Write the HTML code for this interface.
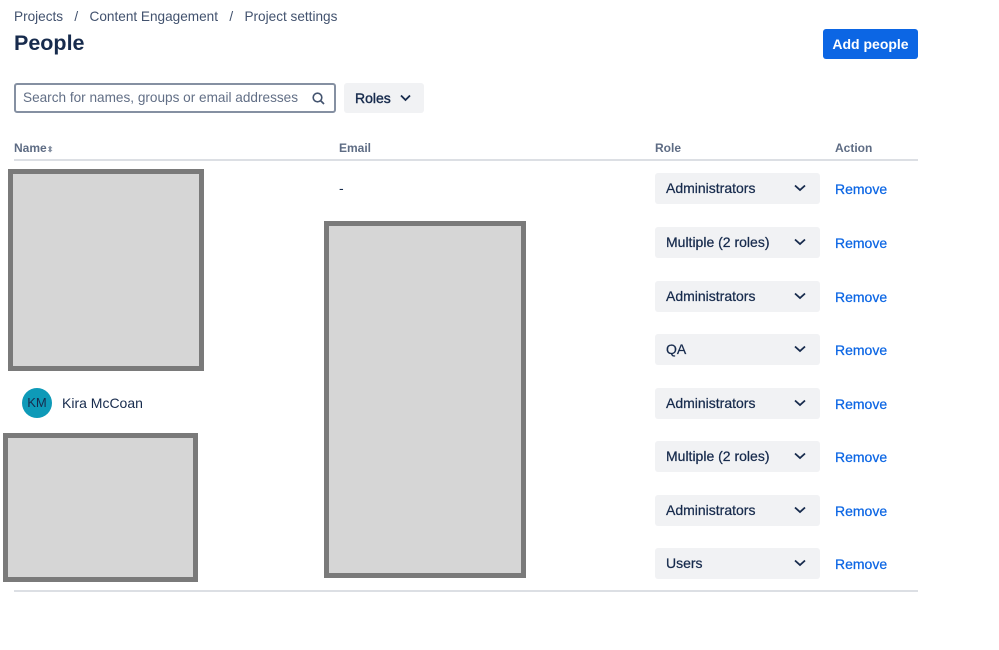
<!DOCTYPE html>
<html><head><meta charset="utf-8"><style>
*{margin:0;padding:0;box-sizing:border-box}
body{width:999px;height:650px;background:#fff;font-family:"Liberation Sans",sans-serif;color:#172b4d;position:relative;overflow:hidden}
.a{position:absolute;white-space:nowrap}
.crumb{top:9px;font-size:13.6px;color:#42526e}
.sel{position:absolute;left:655px;width:165px;height:31px;background:#f1f2f4;border-radius:3px;font-size:14px;line-height:31px;padding-left:11px;color:#172b4d;-webkit-text-stroke:0.25px #172b4d}
.sel svg{position:absolute;right:14px;top:11px}
.rm{position:absolute;left:835px;font-size:14px;color:#0c66e4;-webkit-text-stroke:0.25px #0c66e4}
.gb{position:absolute;background:#d6d6d6;border:5px solid #7a7a7a}
.th{top:141px;font-size:12px;font-weight:bold;color:#5e6c84}
</style></head><body>
<div class="a crumb" style="left:14px">Projects&nbsp;&nbsp;&nbsp;/&nbsp;&nbsp;&nbsp;Content Engagement&nbsp;&nbsp;&nbsp;/&nbsp;&nbsp;&nbsp;Project settings</div>
<div class="a" style="left:14px;top:31px;font-size:21.5px;font-weight:bold;color:#172b4d">People</div>
<div class="a" style="left:823px;top:29px;width:95px;height:30px;background:#0c66e4;border-radius:3px;color:#fff;font-size:14px;font-weight:bold;line-height:30px;text-align:center">Add people</div>
<div class="a" style="left:14px;top:83px;width:322px;height:30px;border:2px solid #8590a2;border-radius:3px;font-size:13.6px;color:#626f86;line-height:26px;padding-left:7px">Search for names, groups or email addresses
<svg style="position:absolute;right:9px;top:7px" width="13" height="13" viewBox="0 0 13 13"><circle cx="5.5" cy="5.5" r="4.3" fill="none" stroke="#44546f" stroke-width="1.6"/><path d="M8.6 8.6L12 12" stroke="#44546f" stroke-width="1.7"/></svg></div>
<div class="a" style="left:344px;top:83px;width:80px;height:30px;background:#f1f2f4;border-radius:3px;font-size:14px;line-height:30px;padding-left:11px;-webkit-text-stroke:0.4px #172b4d">Roles
<svg style="position:absolute;left:56px;top:11px" width="11" height="8" viewBox="0 0 11 8"><path d="M1 1.5l4.5 4.5 4.5-4.5" fill="none" stroke="#172b4d" stroke-width="1.8"/></svg></div>
<div class="a th" style="left:14px">Name<span style="font-size:8px;color:#8590a2">&#x2B0D;</span></div>
<div class="a th" style="left:339px">Email</div>
<div class="a th" style="left:655px">Role</div>
<div class="a th" style="left:835px">Action</div>
<div class="a" style="left:14px;top:159px;width:904px;height:2px;background:#dcdfe4"></div>
<div class="a" style="left:14px;top:590px;width:904px;height:2px;background:#dcdfe4"></div>
<div class="a" style="left:339px;top:180px;font-size:14px">-</div>
<div class="a" style="left:22px;top:388px;width:30px;height:30px;border-radius:50%;background:#0e9ab8;color:#172b4d;font-size:13px;line-height:30px;text-align:center">KM</div>
<div class="a" style="left:62px;top:395px;font-size:14px">Kira McCoan</div>
<div class="gb" style="left:8px;top:169px;width:196px;height:202px"></div>
<div class="gb" style="left:324px;top:221px;width:202px;height:357px"></div>
<div class="gb" style="left:3px;top:433px;width:195px;height:149px"></div>

<div class="sel" style="top:173px">Administrators<svg width="12" height="8" viewBox="0 0 12 8"><path d="M1 1.5l5 4.5 5-4.5" fill="none" stroke="#172b4d" stroke-width="1.8"/></svg></div><div class="rm" style="top:181px">Remove</div>
<div class="sel" style="top:227px">Multiple (2 roles)<svg width="12" height="8" viewBox="0 0 12 8"><path d="M1 1.5l5 4.5 5-4.5" fill="none" stroke="#172b4d" stroke-width="1.8"/></svg></div><div class="rm" style="top:235px">Remove</div>
<div class="sel" style="top:281px">Administrators<svg width="12" height="8" viewBox="0 0 12 8"><path d="M1 1.5l5 4.5 5-4.5" fill="none" stroke="#172b4d" stroke-width="1.8"/></svg></div><div class="rm" style="top:289px">Remove</div>
<div class="sel" style="top:334px">QA<svg width="12" height="8" viewBox="0 0 12 8"><path d="M1 1.5l5 4.5 5-4.5" fill="none" stroke="#172b4d" stroke-width="1.8"/></svg></div><div class="rm" style="top:342px">Remove</div>
<div class="sel" style="top:388px">Administrators<svg width="12" height="8" viewBox="0 0 12 8"><path d="M1 1.5l5 4.5 5-4.5" fill="none" stroke="#172b4d" stroke-width="1.8"/></svg></div><div class="rm" style="top:396px">Remove</div>
<div class="sel" style="top:441px">Multiple (2 roles)<svg width="12" height="8" viewBox="0 0 12 8"><path d="M1 1.5l5 4.5 5-4.5" fill="none" stroke="#172b4d" stroke-width="1.8"/></svg></div><div class="rm" style="top:449px">Remove</div>
<div class="sel" style="top:495px">Administrators<svg width="12" height="8" viewBox="0 0 12 8"><path d="M1 1.5l5 4.5 5-4.5" fill="none" stroke="#172b4d" stroke-width="1.8"/></svg></div><div class="rm" style="top:503px">Remove</div>
<div class="sel" style="top:548px">Users<svg width="12" height="8" viewBox="0 0 12 8"><path d="M1 1.5l5 4.5 5-4.5" fill="none" stroke="#172b4d" stroke-width="1.8"/></svg></div><div class="rm" style="top:556px">Remove</div>
</body></html>
